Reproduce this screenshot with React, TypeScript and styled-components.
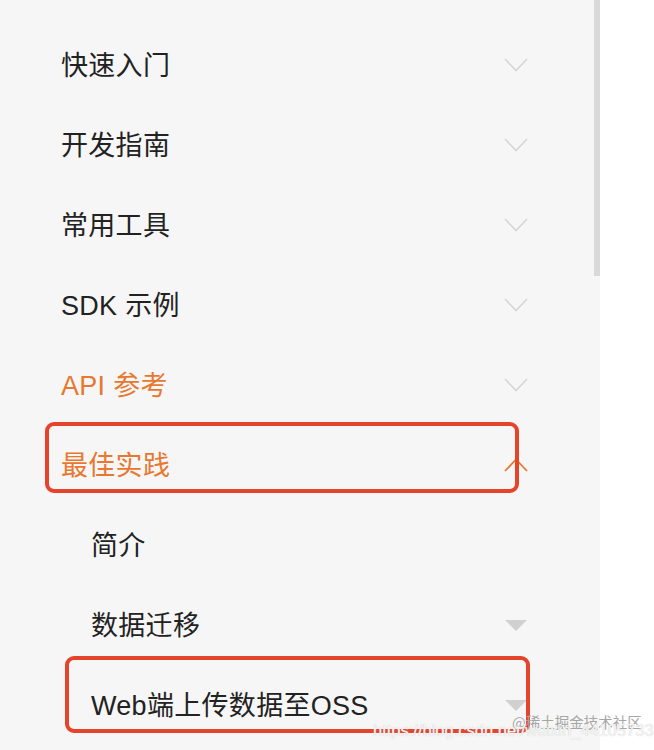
import React from "react";
import styled, { createGlobalStyle } from "styled-components";

const GlobalStyle = createGlobalStyle`
    html, body {
        margin: 0;
        padding: 0;
        background: #ffffff;
    }
    body {
        font-family: "Liberation Sans", "Noto Sans CJK SC", sans-serif;
    }
`;

const ORANGE = "#e8782f";
const ROW_HEIGHT = 80;

/**
 * Page layout styles:
 */
const Page = styled.div`
    position: relative;
    display: flex;
    width: 654px;
    height: 750px;
    overflow: hidden;
`,
    Sidebar = styled.div`
    display: flex;
    width: 600px;
    height: 100%;
    background: #f6f6f6;
`,
    Menu = styled.ul`
    flex: 1;
    list-style: none;
    margin: 0;
    padding: 25px 66px 0 0;
`,
    ScrollTrack = styled.div`
    width: 6px;
    height: 100%;
`,
    ScrollThumb = styled.div`
    height: 276px;
    background: #d9d9d9;
`;

/**
 * Menu row styles:
 */
const Row = styled.li<{ $depth: number; $active?: boolean }>`
    position: relative;
    display: flex;
    align-items: center;
    justify-content: space-between;
    height: ${ROW_HEIGHT}px;
    padding-left: ${(p) => (p.$depth === 0 ? 61 : 91)}px;
    color: ${(p) => (p.$active ? ORANGE : "#222222")};
`,
    Label = styled.span`
    font-family: "Liberation Sans", "Noto Sans CJK SC", sans-serif;
    font-size: 27px;
    line-height: 1;
    padding-top: 2px;
    letter-spacing: 0.3px;
    white-space: nowrap;
`,
    IconBox = styled.span`
    display: flex;
    width: 24px;
    justify-content: center;
`,
    //Red annotation frame drawn over a row
    Highlight = styled.div<{ $top: number; $left: number; $width: number; $height: number }>`
    position: absolute;
    top: ${(p) => p.$top}px;
    left: ${(p) => p.$left}px;
    width: ${(p) => p.$width}px;
    height: ${(p) => p.$height}px;
    box-sizing: border-box;
    border: 4px solid #e6432b;
    border-radius: 9px;
    pointer-events: none;
`;

/**
 * Watermark styles:
 */
const WatermarkSite = styled.div`
    position: absolute;
    left: 512px;
    top: 711px;
    font-family: "Noto Sans CJK SC", sans-serif;
    font-size: 14.5px;
    color: #a6a6a6;
    white-space: nowrap;
`,
    WatermarkUrl = styled.div`
    position: absolute;
    left: 373px;
    top: 721px;
    font-family: "Liberation Sans", Arial, sans-serif;
    font-size: 16.5px;
    color: #f4f4f4;
    text-shadow: 0 0 1px #c8c8c8;
    white-space: nowrap;
`;

const ChevronDown = () => (
    <svg width="24" height="14" viewBox="0 0 24 14">
        <polyline points="1,1 12,12.5 23,1" fill="none" stroke="#d6d6d6" strokeWidth="1.6" />
    </svg>
);

const ChevronUp = () => (
    <svg width="24" height="14" viewBox="0 0 24 14">
        <polyline points="1,13 12,1.5 23,13" fill="none" stroke={ORANGE} strokeWidth="1.8" />
    </svg>
);

const Caret = () => (
    <svg width="22" height="11" viewBox="0 0 22 11">
        <polygon points="0,0 22,0 11,11" fill="#d0d0d0" />
    </svg>
);

type Item = {
    label: string;
    depth: number;
    icon: "down" | "up" | "caret" | "none";
    active?: boolean;
    frame?: { top: number; left: number; width: number; height: number };
};

const items: Item[] = [
    { label: "快速入门", depth: 0, icon: "down" },
    { label: "开发指南", depth: 0, icon: "down" },
    { label: "常用工具", depth: 0, icon: "down" },
    { label: "SDK 示例", depth: 0, icon: "down" },
    { label: "API 参考", depth: 0, icon: "down", active: true },
    { label: "最佳实践", depth: 0, icon: "up", active: true, frame: { top: -3, left: 45, width: 474, height: 71 } },
    { label: "简介", depth: 1, icon: "none" },
    { label: "数据迁移", depth: 1, icon: "caret" },
    { label: "Web端上传数据至OSS", depth: 1, icon: "caret", frame: { top: -9, left: 65, width: 465, height: 77 } },
];

const renderIcon = (icon: Item["icon"]) => {
    if (icon === "down") return <ChevronDown />;
    if (icon === "up") return <ChevronUp />;
    if (icon === "caret") return <Caret />;
    return null;
};

export default function App() {
    return (
        <>
            <GlobalStyle />
            <Page>
                <Sidebar>
                    <Menu>
                        {items.map((item) => (
                            <Row key={item.label} $depth={item.depth} $active={item.active}>
                                <Label>{item.label}</Label>
                                <IconBox>{renderIcon(item.icon)}</IconBox>
                                {item.frame && (
                                    <Highlight
                                        $top={item.frame.top}
                                        $left={item.frame.left}
                                        $width={item.frame.width}
                                        $height={item.frame.height}
                                    />
                                )}
                            </Row>
                        ))}
                    </Menu>
                    <ScrollTrack>
                        <ScrollThumb />
                    </ScrollTrack>
                </Sidebar>
                <WatermarkSite>@稀土掘金技术社区</WatermarkSite>
                <WatermarkUrl>https://blog.csdn.net/weixin_44105733</WatermarkUrl>
            </Page>
        </>
    );
}
